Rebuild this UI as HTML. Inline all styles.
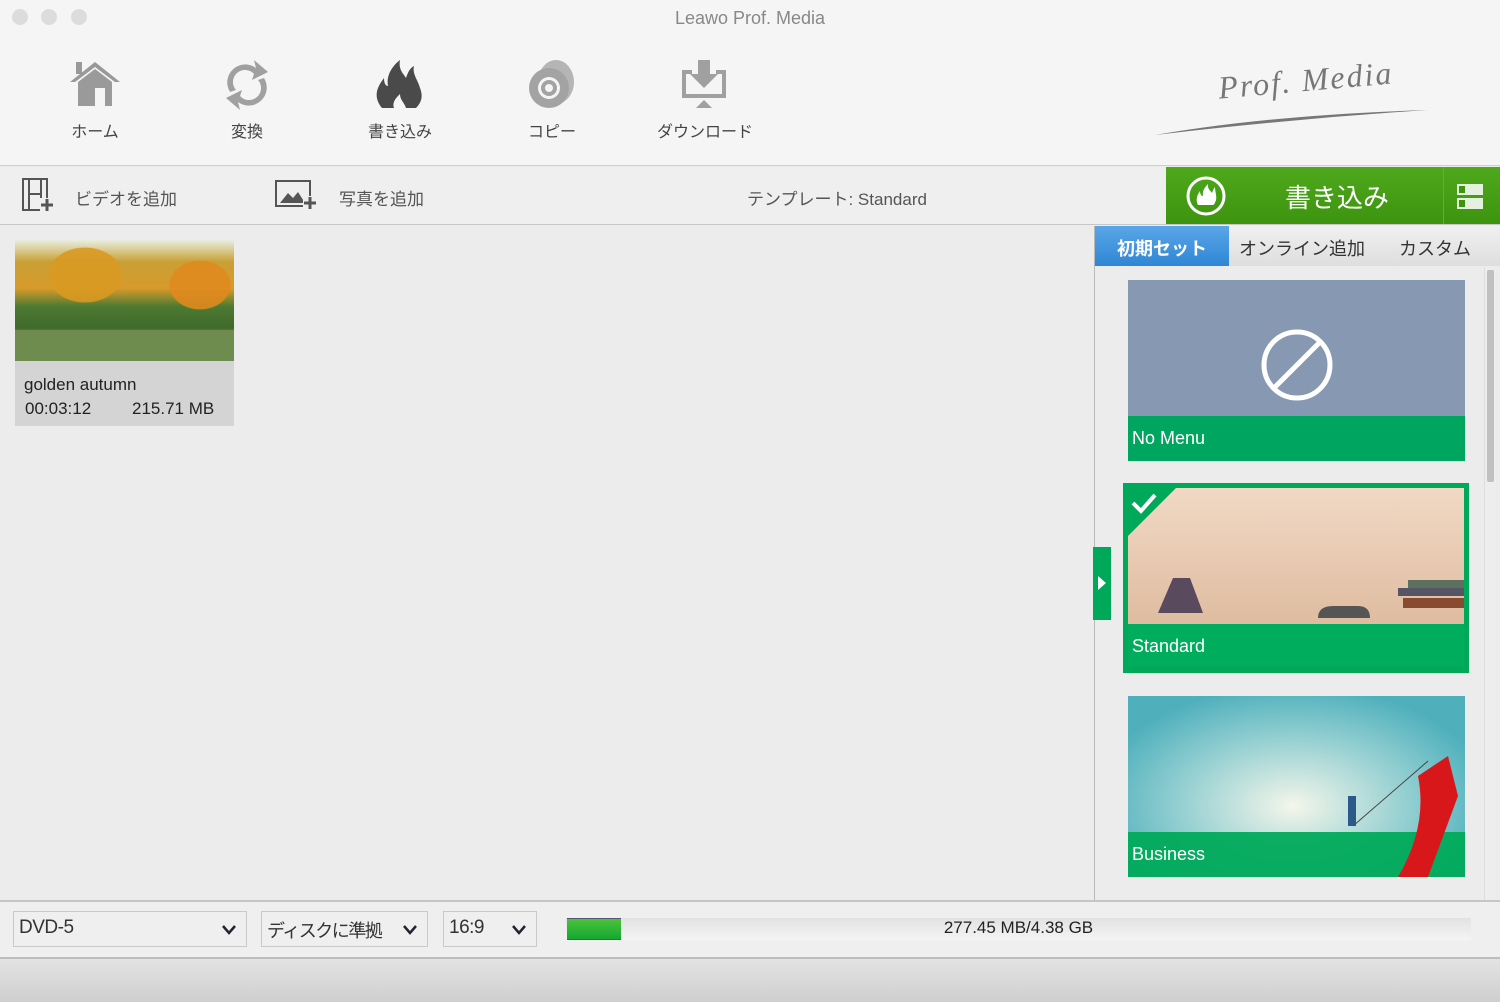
<!DOCTYPE html>
<html><head><meta charset="utf-8"><style>
*{margin:0;padding:0;box-sizing:border-box}
body{width:1500px;height:1002px;overflow:hidden;background:#ececec;font-family:"Liberation Sans","Noto Sans CJK JP",sans-serif;position:relative;color:#333}
.a{position:absolute}
.tb{left:0;top:0;width:1500px;height:166px;background:#f5f5f5;border-bottom:1px solid #cfcfcf}
.dot{width:16px;height:16px;border-radius:50%;background:#dcdcdc;top:9px}
.lbl{font-size:16px;color:#444;text-align:center;width:120px}
.bar2{left:0;top:167px;width:1500px;height:58px;background:#efefef;border-bottom:1px solid #c8c8c8}
.t2{font-size:17px;color:#555}
.card{left:1128px;width:337px}
.cl{position:absolute;left:0;bottom:0;width:100%;height:45px;background:#00a560;color:#fff;font-size:18px;padding:12px 0 0 4px}
.sel{border:1px solid #c9c9c9;background:#efefef;height:36px;top:911px;font-size:19px;color:#333;padding:5px 0 0 5px;white-space:nowrap}
.chev{position:absolute;right:10px;top:13px}
</style></head><body>
<div class="a tb"></div>
<div class="a dot" style="left:12px"></div><div class="a dot" style="left:41px"></div><div class="a dot" style="left:71px"></div>
<div class="a" style="left:0;width:1500px;top:8px;text-align:center;font-size:18px;color:#888">Leawo Prof. Media</div>

<svg class="a" style="left:66px;top:60px" width="58" height="50" viewBox="0 0 58 50"><path d="M4 22 L29 2 L54 22 L49 22 L29 7 L9 22Z" fill="#999"/><path d="M12 22 L29 9 L46 22 V46 H12Z" fill="#9a9a9a"/><rect x="29" y="28" width="10" height="18" fill="#f5f5f5"/><rect x="10" y="2" width="6" height="12" fill="#999"/></svg>
<svg class="a" style="left:224px;top:58px" width="46" height="54" viewBox="0 0 46 54"><path d="M6 34 A18 18 0 0 1 32 10 L30 2 L44 14 L28 22 L30 16 A12 12 0 0 0 12 32Z" fill="#a0a0a0"/><path d="M40 20 A18 18 0 0 1 14 44 L16 52 L2 40 L18 32 L16 38 A12 12 0 0 0 34 22Z" fill="#a0a0a0"/></svg>
<svg class="a" style="left:374px;top:58px" width="52" height="54" viewBox="0 0 52 54"><path d="M8 50 C-2 38 4 28 10 20 C10 26 12 28 14 28 C12 18 18 8 26 2 C24 12 30 16 32 20 C34 14 36 10 40 8 C38 16 44 22 46 30 C50 40 46 46 42 50 Z" fill="#4a4a4a"/><path d="M20 50 C18 44 22 40 26 36 C26 42 30 44 32 50Z" fill="#f5f5f5"/></svg>
<svg class="a" style="left:526px;top:58px" width="52" height="54" viewBox="0 0 52 54"><ellipse cx="30" cy="24" rx="18" ry="22" fill="#b5b5b5"/><circle cx="23" cy="30" r="20" fill="#a3a3a3"/><circle cx="23" cy="30" r="11" fill="#f5f5f5"/><circle cx="23" cy="30" r="8" fill="#a3a3a3"/><circle cx="23" cy="30" r="4" fill="#f5f5f5"/></svg>
<svg class="a" style="left:678px;top:58px" width="52" height="52" viewBox="0 0 52 52"><path d="M4 12 H14 V16 H8 V36 H44 V16 H38 V12 H48 V40 H4Z" fill="#a0a0a0"/><path d="M20 2 H32 V16 H40 L26 30 L12 16 H20Z" fill="#a0a0a0"/><path d="M18 50 L26 42 L34 50Z" fill="#a0a0a0"/></svg>
<div class="a lbl" style="left:35px;top:118px">ホーム</div>
<div class="a lbl" style="left:187px;top:118px">変換</div>
<div class="a lbl" style="left:340px;top:118px">書き込み</div>
<div class="a lbl" style="left:492px;top:118px">コピー</div>
<div class="a lbl" style="left:645px;top:118px">ダウンロード</div>
<div class="a" style="left:1218px;top:62px;font-family:'Liberation Serif',serif;font-style:italic;font-size:32px;color:#777;transform:rotate(-5deg);letter-spacing:2px">Prof. Media</div>
<svg class="a" style="left:1150px;top:105px" width="280" height="35"><path d="M5 30 Q120 10 278 5 Q140 14 5 30Z" fill="#777"/></svg>

<div class="a bar2"></div>
<svg class="a" style="left:22px;top:178px" width="32" height="34" viewBox="0 0 32 34"><rect x="1" y="1" width="24" height="31" fill="none" stroke="#555" stroke-width="2"/><rect x="6" y="1" width="2" height="31" fill="#555"/><rect x="18" y="1" width="2" height="31" fill="#555"/><path d="M8 16 H18" stroke="#555" stroke-width="2"/><rect x="18" y="20" width="14" height="14" fill="#efefef"/><path d="M25 21 V33 M19 27 H31" stroke="#555" stroke-width="3"/></svg>
<div class="a t2" style="left:75px;top:185px">ビデオを追加</div>
<svg class="a" style="left:275px;top:180px" width="42" height="30" viewBox="0 0 42 30"><rect x="1" y="1" width="34" height="25" fill="none" stroke="#555" stroke-width="2"/><path d="M5 23 L13 13 L18 18 L23 12 L30 23Z" fill="#555"/><rect x="28" y="16" width="14" height="14" fill="#efefef"/><path d="M35 17 V29 M29 23 H41" stroke="#555" stroke-width="3"/></svg>
<div class="a t2" style="left:339px;top:185px">写真を追加</div>
<div class="a t2" style="left:747px;top:185px">テンプレート: Standard</div>
<div class="a" style="left:1166px;top:167px;width:334px;height:57px;background:linear-gradient(#4ea81b,#3d940f)"></div>
<div class="a" style="left:1443px;top:167px;width:1px;height:57px;background:#5bb52a"></div>
<svg class="a" style="left:1185px;top:175px" width="42" height="42" viewBox="0 0 42 42"><circle cx="21" cy="21" r="18" fill="none" stroke="#fff" stroke-width="3"/><path d="M13 30 C10 24 13 19 15 16 C15 20 17 21 18 21 C17 16 20 12 23 9 C22 14 26 16 27 18 C28 15 29 13 30 12 C30 17 32 21 31 25 C30 28 29 30 28 30Z" fill="#fff"/></svg>
<div class="a" style="left:1285px;top:178px;font-size:26px;color:#fff">書き込み</div>
<svg class="a" style="left:1457px;top:184px" width="27" height="26"><rect x="0" y="0" width="26" height="11" fill="#e6f0de"/><rect x="0" y="14" width="26" height="11" fill="#e6f0de"/><rect x="2" y="2" width="6" height="7" fill="#3d940f"/><rect x="2" y="16" width="6" height="7" fill="#3d940f"/></svg>

<div class="a" style="left:15px;top:240px;width:219px;height:186px;background:#d4d4d4"></div>
<div class="a" style="left:15px;top:240px;width:219px;height:121px;background:linear-gradient(#e8eee0 0%,#c9a036 18%,#d79a2a 40%,#4d7a32 55%,#3f6a2a 72%,#6b8a4a 80%,#6f8f55 100%)"></div>
<div class="a" style="left:15px;top:240px;width:219px;height:121px;background:radial-gradient(ellipse 60px 45px at 70px 35px,#d99a22 60%,transparent 62%),radial-gradient(ellipse 50px 40px at 185px 45px,#e08a1e 60%,transparent 62%);opacity:.9"></div>
<div class="a" style="left:15px;top:330px;width:219px;height:31px;background:#6d8c4e"></div>
<div class="a" style="left:24px;top:375px;font-size:17px;color:#222">golden autumn</div>
<div class="a" style="left:25px;top:399px;font-size:17px;color:#222">00:03:12</div>
<div class="a" style="left:132px;top:399px;font-size:17px;color:#222">215.71 MB</div>

<div class="a" style="left:1094px;top:226px;width:1px;height:676px;background:#b8b8b8"></div>
<div class="a" style="left:1095px;top:226px;width:405px;height:40px;background:linear-gradient(#f0f0f0,#dedede)"></div>
<div class="a" style="left:1095px;top:226px;width:134px;height:40px;background:linear-gradient(#5aa6e8,#2f86d4);color:#fff;font-size:18px;font-weight:bold;text-align:center;padding-top:9px">初期セット</div>
<div class="a" style="left:1239px;top:235px;font-size:18px;color:#333">オンライン追加</div>
<div class="a" style="left:1399px;top:235px;font-size:18px;color:#333">カスタム</div>
<div class="a" style="left:1484px;top:268px;width:12px;height:634px;background:#ededed;border-left:1px solid #ddd"></div>
<div class="a" style="left:1487px;top:270px;width:7px;height:212px;background:#c0c0c0;border-radius:2px"></div>

<div class="a card" style="top:280px;height:181px;background:#8798b3"><div class="cl">No Menu</div>
<svg style="position:absolute;left:133px;top:49px" width="72" height="72"><circle cx="36" cy="36" r="33" fill="none" stroke="#fff" stroke-width="5"/><path d="M13 59 L59 13" stroke="#fff" stroke-width="5"/></svg></div>

<div class="a" style="left:1123px;top:483px;width:346px;height:190px;background:#00a85a"></div>
<div class="a" style="left:1128px;top:488px;width:336px;height:136px;background:linear-gradient(#f1d9c5,#dfbca0)"></div>
<div class="a" style="left:1128px;top:624px;width:336px;height:42px;background:#00ad5c"></div>
<svg class="a" style="left:1128px;top:488px" width="336" height="136"><path d="M30 125 L45 90 L62 90 L75 125Z" fill="#5a4a5e"/><rect x="270" y="100" width="66" height="8" fill="#556"/><rect x="275" y="110" width="61" height="10" fill="#8a4a30"/><rect x="280" y="92" width="56" height="8" fill="#5d7060"/><path d="M190 130 Q190 118 205 118 H230 Q242 118 242 130Z" fill="#555"/></svg>
<svg class="a" style="left:1128px;top:488px" width="48" height="48"><path d="M0 0 H48 L0 48Z" fill="#00a85a"/><path d="M5 15 L13 23 L27 7" fill="none" stroke="#fff" stroke-width="4"/></svg>
<div class="a" style="left:1132px;top:636px;font-size:18px;color:#fff">Standard</div>
<div class="a" style="left:1093px;top:547px;width:18px;height:73px;background:#00a85a"></div>
<svg class="a" style="left:1098px;top:576px" width="8" height="14"><path d="M0 0 L8 7 L0 14Z" fill="#fff"/></svg>

<div class="a card" style="top:696px;height:181px;background:radial-gradient(ellipse 200px 120px at 165px 110px,#f4f6ea,#8fcdd0 60%,#4fb0bc)"><div class="cl" style="background:rgba(0,170,90,.95)">Business</div>
<svg style="position:absolute;left:0;top:0" width="337" height="181"><path d="M290 80 L320 60 L330 100 L300 181 L270 181 Q300 130 290 80Z" fill="#d8171a"/><path d="M225 130 L300 65" stroke="#444" stroke-width="1"/><rect x="220" y="100" width="8" height="30" fill="#2b5a8a"/></svg></div>

<div class="a" style="left:0;top:900px;width:1500px;height:2px;background:#c6c6c6"></div>
<div class="a" style="left:0;top:902px;width:1500px;height:56px;background:#efefef"></div>
<div class="a" style="left:0;top:957px;width:1500px;height:2px;background:#bdbdbd"></div>
<div class="a" style="left:0;top:959px;width:1500px;height:43px;background:linear-gradient(#e3e3e3,#cfcfcf)"></div>
<div class="a sel" style="left:13px;width:234px;letter-spacing:-0.5px">DVD-5<svg class="chev" width="14" height="10"><path d="M1 1 L7 8 L13 1" fill="none" stroke="#223" stroke-width="2.5"/></svg></div>
<div class="a sel" style="left:261px;width:167px;font-size:18px;letter-spacing:-1.5px">ディスクに準拠<svg class="chev" width="14" height="10"><path d="M1 1 L7 8 L13 1" fill="none" stroke="#223" stroke-width="2.5"/></svg></div>
<div class="a sel" style="left:443px;width:94px;letter-spacing:-0.5px">16:9<svg class="chev" width="14" height="10"><path d="M1 1 L7 8 L13 1" fill="none" stroke="#223" stroke-width="2.5"/></svg></div>
<div class="a" style="left:566px;top:918px;width:905px;height:22px;background:linear-gradient(#e2e2e2,#f4f4f4)"></div>
<div class="a" style="left:567px;top:918px;width:54px;height:22px;background:linear-gradient(#4cc23a,#14a832);border-top:1px solid #557;border-bottom:1px solid #557"></div>
<div class="a" style="left:566px;top:918px;width:905px;text-align:center;font-size:17px;color:#222">277.45 MB/4.38 GB</div>
</body></html>
